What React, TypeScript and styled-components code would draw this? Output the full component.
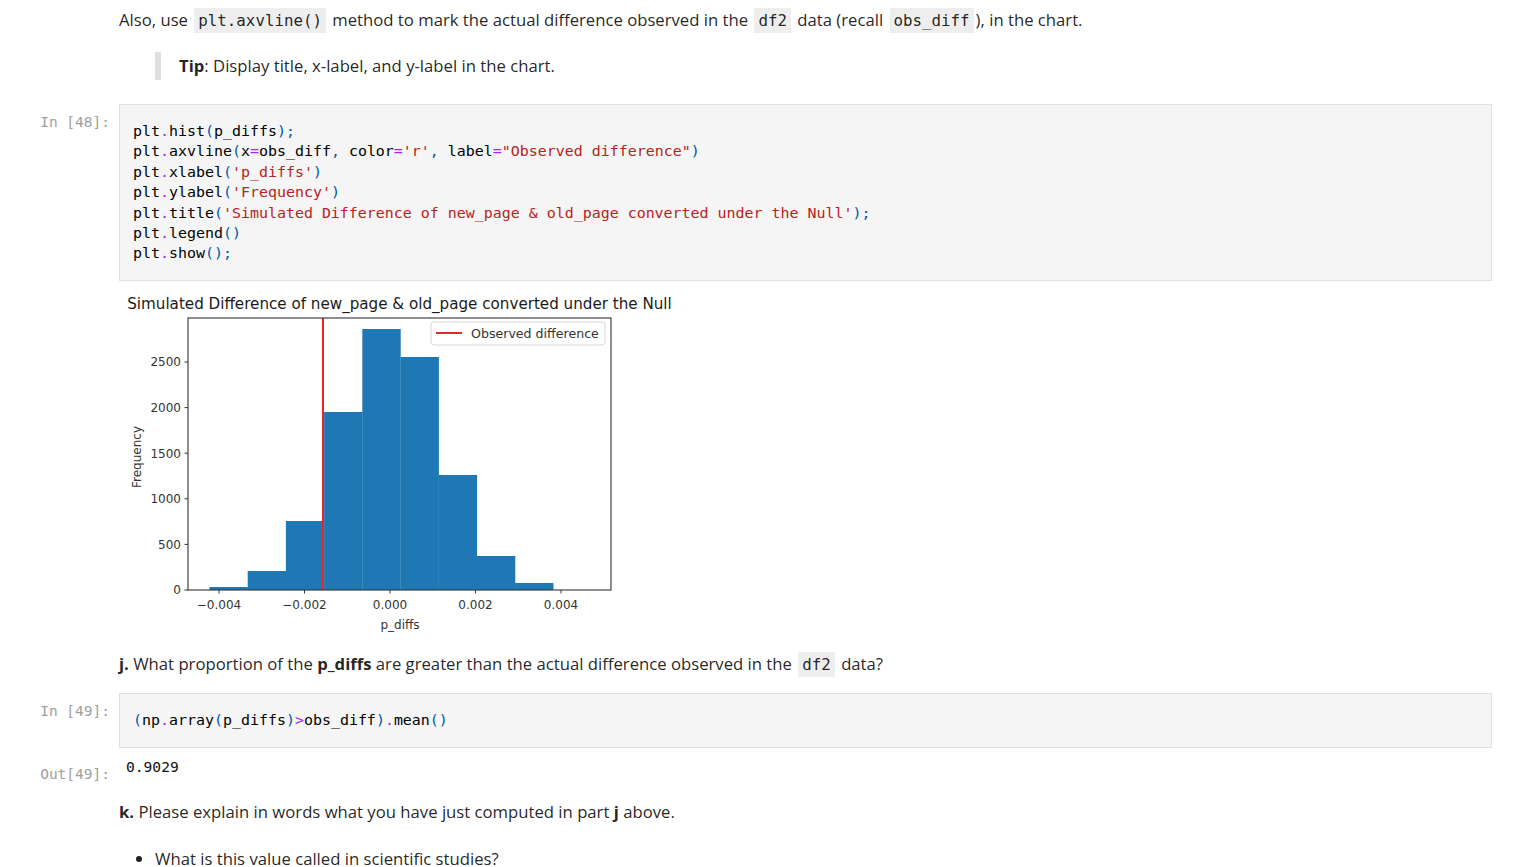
import React from "react";
import styled, { createGlobalStyle } from "styled-components";

const Global = createGlobalStyle`
  html, body { margin: 0; padding: 0; background: #fff; }
  body {
    font-family: "Open Sans", "Noto Sans", sans-serif;
    color: rgba(0, 0, 0, 0.87);
  }
`;

const Notebook = styled.main`
  width: 1515px;
  box-sizing: border-box;
  padding: 0 23px 0 0;
`;

const Row = styled.section<{ $mt?: number }>`
  display: flex;
  margin-top: ${(p) => p.$mt ?? 0}px;
`;

const Prompt = styled.div<{ $pt?: number }>`
  flex: 0 0 119px;
  box-sizing: border-box;
  padding: ${(p) => p.$pt ?? 0}px 9px 0 0;
  text-align: right;
  font-family: "DejaVu Sans Mono", monospace;
  font-size: 14.5px;
  line-height: 20px;
  color: #a0a0a0;
  white-space: pre;
`;

const Body = styled.div<{ $pl?: number; $pt?: number }>`
  flex: 1;
  min-width: 0;
  padding: ${(p) => p.$pt ?? 0}px 0 0 ${(p) => p.$pl ?? 0}px;
`;

const Para = styled.p<{ $mt?: number }>`
  margin: ${(p) => p.$mt ?? 0}px 0 0;
  font-size: 16.7px;
  line-height: 24px;
`;

const InlineCode = styled.code`
  font-family: "DejaVu Sans Mono", monospace;
  font-size: 15.8px;
  line-height: 1;
  background: #eeeeee;
  padding: 3px 4px;
  margin: 0 2px;
  color: rgba(0, 0, 0, 0.87);
`;

const Quote = styled.blockquote`
  margin: 20px 0 0 36px;
  border-left: 6px solid #e0e0e0;
  padding: 0 0 0 18px;
  font-size: 16.7px;
  line-height: 28px;
`;

const CodeCell = styled.div`
  background: #f5f5f5;
  border: 1px solid #e0e0e0;
  padding: 16px 13px 16.5px;
`;

const Pre = styled.pre`
  margin: 0;
  font-family: "DejaVu Sans Mono", monospace;
  font-size: 14.95px;
  line-height: 20.4px;
  color: #000;
`;

type Kind = "name" | "op" | "punc" | "str" | "ws";

const tokenColors: Record<Kind, string> = {
  name: "#000000",
  op: "#aa22ff",
  punc: "#0055aa",
  str: "#ba2121",
  ws: "inherit",
};

const Tok = styled.span<{ $k: Kind }>`
  color: ${(p) => tokenColors[p.$k]};
`;

const OutText = styled.div`
  font-family: "DejaVu Sans Mono", monospace;
  font-size: 14.6px;
  line-height: 20px;
  color: #111;
`;

const List = styled.ul`
  margin: 23px 0 0;
  padding: 0 0 0 36px;
  font-size: 16.7px;
  line-height: 24px;
`;

const ChartSvg = styled.svg`
  display: block;
  font-family: "DejaVu Sans", sans-serif;
`;

function tokenize(src: string): { k: Kind; t: string }[] {
  const re = /('[^']*'|"[^"]*")|([.=><&])|([()\[\],;:])|(\s+)|([A-Za-z_][A-Za-z0-9_]*|\d+)/g;
  const out: { k: Kind; t: string }[] = [];
  let m: RegExpExecArray | null;
  while ((m = re.exec(src))) {
    if (m[1]) out.push({ k: "str", t: m[1] });
    else if (m[2]) out.push({ k: "op", t: m[2] });
    else if (m[3]) out.push({ k: "punc", t: m[3] });
    else if (m[4]) out.push({ k: "ws", t: m[4] });
    else out.push({ k: "name", t: m[5] });
  }
  return out;
}

const Highlighted: React.FC<{ code: string }> = ({ code }) => (
  <Pre>
    {tokenize(code).map((tk, i) => (
      <Tok key={i} $k={tk.k}>
        {tk.t}
      </Tok>
    ))}
  </Pre>
);

const cell48 = `plt.hist(p_diffs);
plt.axvline(x=obs_diff, color='r', label="Observed difference")
plt.xlabel('p_diffs')
plt.ylabel('Frequency')
plt.title('Simulated Difference of new_page & old_page converted under the Null');
plt.legend()
plt.show();`;

const cell49 = `(np.array(p_diffs)>obs_diff).mean()`;

// Histogram drawing (coordinates relative to chart origin)
const AX = { x0: 69, x1: 492, y0: 37, y1: 309 };
const binStart = 90.5;
const binW = 38.2;
const binTops = [306, 290, 240, 131, 48, 76, 194, 275, 302];
const yTicks = [
  { v: "0", y: 309 },
  { v: "500", y: 263.4 },
  { v: "1000", y: 217.8 },
  { v: "1500", y: 172.2 },
  { v: "2000", y: 126.6 },
  { v: "2500", y: 81 },
];
const xTicks = [
  { v: "\u22120.004", x: 100 },
  { v: "\u22120.002", x: 185.5 },
  { v: "0.000", x: 271 },
  { v: "0.002", x: 356.5 },
  { v: "0.004", x: 442 },
];

const Histogram: React.FC = () => (
  <ChartSvg width={580} height={360} viewBox="0 0 580 360">
    <text x={280.5} y={27.5} fontSize={15.15} fill="#1a1a1a" textAnchor="middle">
      Simulated Difference of new_page &amp; old_page converted under the Null
    </text>
    {binTops.map((top, i) => (
      <rect
        key={i}
        x={binStart + i * binW}
        y={top}
        width={binW + 0.2}
        height={AX.y1 - top}
        fill="#1f77b4"
      />
    ))}
    <line x1={204} x2={204} y1={AX.y0} y2={AX.y1} stroke="#e8262a" strokeWidth={2} />
    <rect
      x={AX.x0}
      y={AX.y0}
      width={AX.x1 - AX.x0}
      height={AX.y1 - AX.y0}
      fill="none"
      stroke="#333"
      strokeWidth={1.1}
    />
    {yTicks.map((t) => (
      <g key={t.v}>
        <line x1={AX.x0 - 3.5} x2={AX.x0} y1={t.y} y2={t.y} stroke="#333" strokeWidth={1} />
        <text x={AX.x0 - 7} y={t.y + 4.3} fontSize={12} fill="#333" textAnchor="end">
          {t.v}
        </text>
      </g>
    ))}
    {xTicks.map((t) => (
      <g key={t.v}>
        <line x1={t.x} x2={t.x} y1={AX.y1} y2={AX.y1 + 3.5} stroke="#333" strokeWidth={1} />
        <text x={t.x} y={327.5} fontSize={12} fill="#333" textAnchor="middle">
          {t.v}
        </text>
      </g>
    ))}
    <text x={281} y={347.5} fontSize={12} fill="#333" textAnchor="middle">
      p_diffs
    </text>
    <text
      x={0}
      y={0}
      fontSize={12}
      fill="#333"
      textAnchor="middle"
      transform="translate(22 176) rotate(-90)"
    >
      Frequency
    </text>
    <rect x={312} y={41} width={174} height={23} rx={3} fill="#fff" fillOpacity={0.8} stroke="#d6d6d6" />
    <line x1={317} x2={343} y1={52} y2={52} stroke="#e8262a" strokeWidth={2} />
    <text x={352} y={56.5} fontSize={12.6} fill="#333">
      Observed difference
    </text>
  </ChartSvg>
);

export default function App() {
  return (
    <>
      <Global />
      <Notebook>
        <Row>
          <Prompt />
          <Body>
            <Para $mt={8}>
              Also, use <InlineCode>plt.axvline()</InlineCode> method to mark the actual difference
              observed in the <InlineCode>df2</InlineCode> data (recall <InlineCode>obs_diff</InlineCode>), in
              the chart.
            </Para>
            <Quote>
              <b>Tip</b>: Display title, x-label, and y-label in the chart.
            </Quote>
          </Body>
        </Row>

        <Row $mt={24}>
          <Prompt $pt={8}>In [48]:</Prompt>
          <Body>
            <CodeCell>
              <Highlighted code={cell48} />
            </CodeCell>
          </Body>
        </Row>

        <Row>
          <Prompt />
          <Body>
            <Histogram />
          </Body>
        </Row>

        <Row $mt={11}>
          <Prompt />
          <Body>
            <Para>
              <b>j.</b> What proportion of the <b>p_diffs</b> are greater than the actual difference
              observed in the <InlineCode>df2</InlineCode> data?
            </Para>
          </Body>
        </Row>

        <Row $mt={17}>
          <Prompt $pt={8}>In [49]:</Prompt>
          <Body>
            <CodeCell>
              <Highlighted code={cell49} />
            </CodeCell>
          </Body>
        </Row>

        <Row>
          <Prompt $pt={16}>Out[49]:</Prompt>
          <Body $pl={7} $pt={9}>
            <OutText>0.9029</OutText>
          </Body>
        </Row>

        <Row $mt={16}>
          <Prompt />
          <Body>
            <Para>
              <b>k.</b> Please explain in words what you have just computed in part <b>j</b> above.
            </Para>
            <List>
              <li>What is this value called in scientific studies?</li>
            </List>
          </Body>
        </Row>
      </Notebook>
    </>
  );
}
